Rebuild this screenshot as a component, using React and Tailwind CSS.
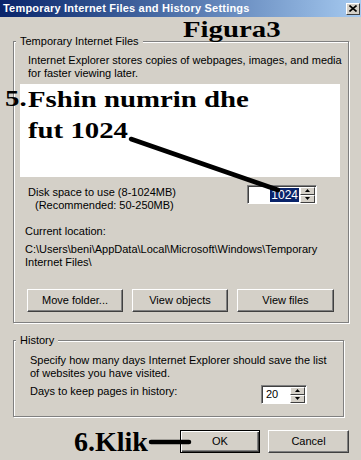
function RaisedButton({ children, className = "", isDefault = false }) {
  if (isDefault) {
    return (
      <div className={`flex items-center justify-center border border-black bg-[#d4d0c8] shadow-[inset_1px_1px_0_#fff,inset_-1px_-1px_0_#404040,inset_-2px_-2px_0_#808080] ${className}`}>
        {children}
      </div>
    );
  }
  return (
    <div className={`flex items-center justify-center border border-t-white border-l-white border-r-[#404040] border-b-[#404040] bg-[#d4d0c8] shadow-[inset_-1px_-1px_0_#808080] ${className}`}>
      {children}
    </div>
  );
}

function SpinArrows() {
  return (
    <div className="flex w-[15px] flex-col">
      <div className="flex h-[8px] items-center justify-center border border-t-white border-l-white border-r-[#404040] border-b-[#404040] bg-[#d4d0c8]">
        <svg width="5" height="3" viewBox="0 0 5 3">
          <path d="M2.5 0 L5 3 L0 3 Z" fill="#000" />
        </svg>
      </div>
      <div className="flex h-[8px] items-center justify-center border border-t-white border-l-white border-r-[#404040] border-b-[#404040] bg-[#d4d0c8]">
        <svg width="5" height="3" viewBox="0 0 5 3">
          <path d="M0 0 L5 0 L2.5 3 Z" fill="#000" />
        </svg>
      </div>
    </div>
  );
}

export default function App() {
  return (
    <div className="relative h-[460px] w-[361px] overflow-hidden bg-[#d4d0c8] font-['Liberation_Sans',Arial,sans-serif] text-[11px] leading-[13px] text-black">
      {/* barra del titulo */}
      <div className="flex h-[17px] items-center bg-linear-to-r from-[#0a246a] to-[#a6caf0] pl-[3px]">
        <span className="whitespace-nowrap font-bold tracking-[0.2px] text-white">Temporary Internet Files and History Settings</span>
        <div className="ml-auto mr-[1px] flex h-[12px] w-[14px] items-center justify-center border border-t-white border-l-white border-r-[#404040] border-b-[#404040] bg-[#d4d0c8]">
          <svg width="8" height="7" viewBox="0 0 8 7">
            <path d="M0.5 0.5 L7.5 6.5 M7.5 0.5 L0.5 6.5" stroke="#000" strokeWidth="1.6" />
          </svg>
        </div>
      </div>

      {/* Temporary Internet Files */}
      <div className="relative ml-[13px] mt-[24px] h-[282px] w-[336px] border border-[#808080] shadow-[inset_1px_1px_0_#fff,1px_1px_0_#fff]">
        <span className="absolute left-[2px] top-[-7px] bg-[#d4d0c8] px-[4px]">Temporary Internet Files</span>
        <p className="mt-[12px] whitespace-nowrap pl-[14px]">
          Internet Explorer stores copies of webpages, images, and media
          <br />
          for faster viewing later.
        </p>

        <div className="ml-[6px] mt-[4px] h-[93px] w-[320px] bg-white pl-[8px]">
          <p className="origin-left scale-x-[1.2] whitespace-nowrap font-['Liberation_Serif',serif] text-[24px] font-bold leading-[31px]">
            Fshin numrin dhe
            <br />
            fut 1024
          </p>
        </div>

        <div className="mt-[9px] flex items-start">
          <div className="w-[233px] pl-[14px]">
            <p>Disk space to use (8-1024MB)</p>
            <p className="pl-[7px]">(Recommended: 50-250MB)</p>
          </div>
          <div className="-mt-[1px] flex h-[19px] w-[70px] items-center justify-end border border-t-[#808080] border-l-[#808080] border-r-white border-b-white bg-white pr-[1px] shadow-[inset_1px_1px_0_#404040]">
            <span className="mr-[1px] bg-[#0a246a] px-[1px] text-[12px] leading-[14px] text-white">1024</span>
            <SpinArrows />
          </div>
        </div>

        <p className="mt-[13px] pl-[11px]">Current location:</p>
        <p className="mt-[5px] whitespace-nowrap pl-[11px]">
          C:\Users\beni\AppData\Local\Microsoft\Windows\Temporary
          <br />
          Internet Files\
        </p>

        <div className="mt-[20px] flex gap-[9px] pl-[13px]">
          <RaisedButton className="h-[23px] w-[96px]">Move folder...</RaisedButton>
          <RaisedButton className="h-[23px] w-[96px]">View objects</RaisedButton>
          <RaisedButton className="h-[23px] w-[97px]">View files</RaisedButton>
        </div>
      </div>

      {/* History */}
      <div className="relative ml-[13px] mt-[17px] h-[77px] w-[331px] border border-[#808080] shadow-[inset_1px_1px_0_#fff,1px_1px_0_#fff]">
        <span className="absolute left-[2px] top-[-7px] bg-[#d4d0c8] px-[4px]">History</span>
        <p className="mt-[13px] whitespace-nowrap pl-[16px]">
          Specify how many days Internet Explorer should save the list
          <br />
          of websites you have visited.
        </p>
        <div className="mt-[5px] flex items-start">
          <p className="w-[247px] pl-[16px]">Days to keep pages in history:</p>
          <div className="flex h-[19px] w-[46px] items-center border border-t-[#808080] border-l-[#808080] border-r-white border-b-white bg-white pr-[1px] shadow-[inset_1px_1px_0_#404040]">
            <span className="pl-[4px]">20</span>
            <div className="ml-auto">
              <SpinArrows />
            </div>
          </div>
        </div>
      </div>

      {/* botones */}
      <div className="ml-[180px] mt-[13px] flex gap-[8px]">
        <RaisedButton isDefault className="h-[23px] w-[80px]">OK</RaisedButton>
        <RaisedButton className="h-[23px] w-[81px]">Cancel</RaisedButton>
      </div>

      {/* anotaciones */}
      <span className="absolute left-[183px] top-[17px] origin-left scale-x-[1.2] whitespace-nowrap font-['Liberation_Serif',serif] text-[24px] font-bold leading-[24px]">Figura3</span>
      <span className="absolute left-[5px] top-[86px] origin-left scale-x-[1.2] font-['Liberation_Serif',serif] text-[24px] font-bold leading-[24px]">5.</span>
      <span className="absolute left-[74px] top-[428px] whitespace-nowrap font-['Liberation_Serif',serif] text-[28px] font-bold leading-[28px]">6.Klik</span>
      <svg className="pointer-events-none absolute left-0 top-0" width="361" height="460" viewBox="0 0 361 460">
        <line x1="131" y1="139" x2="278" y2="190" stroke="#000" strokeWidth="4.5" strokeLinecap="round" />
        <line x1="151" y1="442" x2="189" y2="442" stroke="#000" strokeWidth="4.5" strokeLinecap="round" />
      </svg>
    </div>
  );
}
